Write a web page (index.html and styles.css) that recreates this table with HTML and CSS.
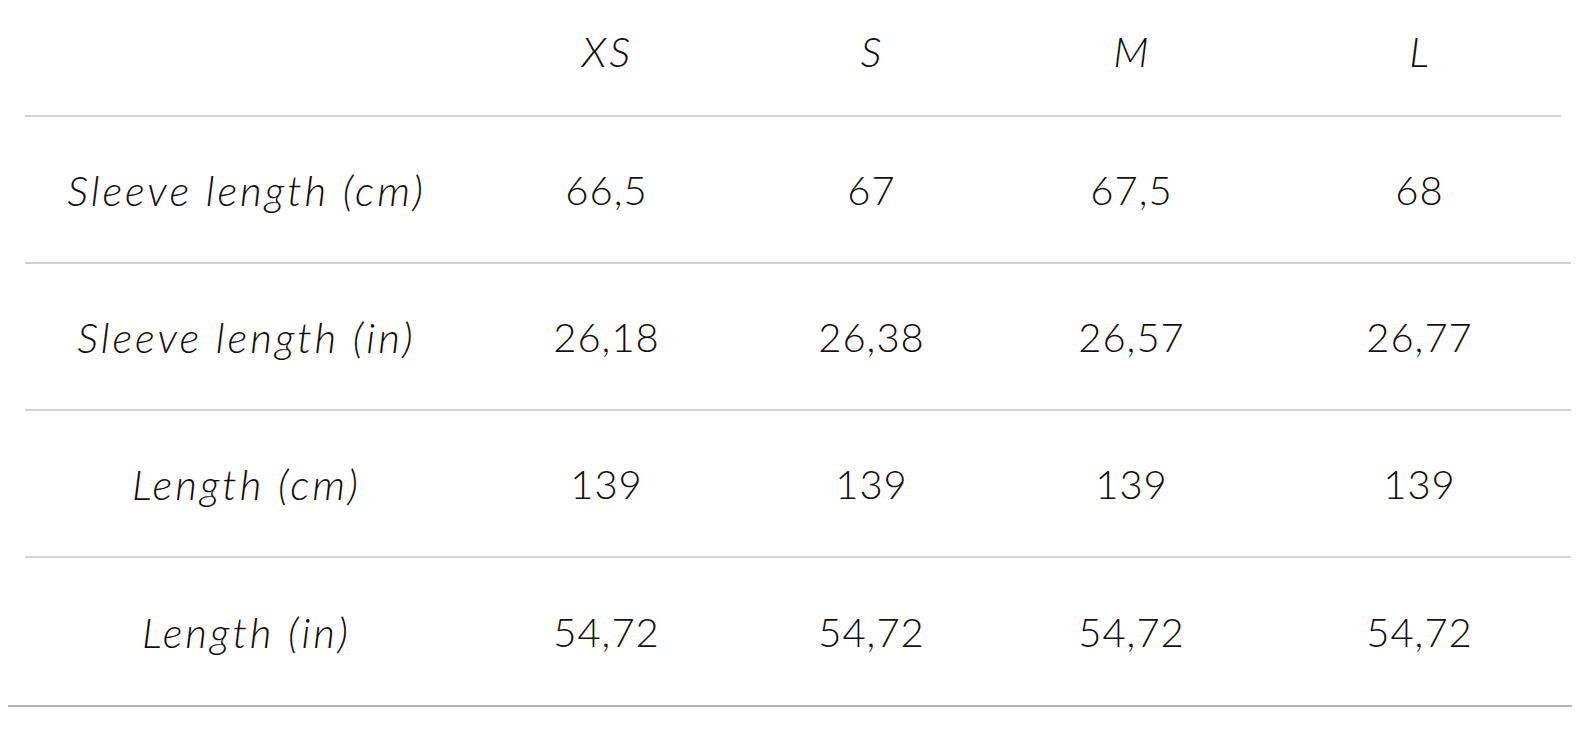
FILE: index.html
```html
<!DOCTYPE html>
<html lang="en">
<head>
<meta charset="utf-8">
<title>Size chart</title>
<link rel="stylesheet" href="styles.css">
</head>
<body>
<div class="chart">
  <div class="row head">
    <div class="cell label"></div>
    <div class="cell size">XS</div>
    <div class="cell size">S</div>
    <div class="cell size">M</div>
    <div class="cell size">L</div>
  </div>
  <div class="row">
    <div class="cell label">Sleeve length (cm)</div>
    <div class="cell num">66,5</div>
    <div class="cell num">67</div>
    <div class="cell num">67,5</div>
    <div class="cell num">68</div>
  </div>
  <div class="row">
    <div class="cell label">Sleeve length (in)</div>
    <div class="cell num">26,18</div>
    <div class="cell num">26,38</div>
    <div class="cell num">26,57</div>
    <div class="cell num">26,77</div>
  </div>
  <div class="row">
    <div class="cell label">Length (cm)</div>
    <div class="cell num">139</div>
    <div class="cell num">139</div>
    <div class="cell num">139</div>
    <div class="cell num">139</div>
  </div>
  <div class="row last">
    <div class="cell label">Length (in)</div>
    <div class="cell num">54,72</div>
    <div class="cell num">54,72</div>
    <div class="cell num">54,72</div>
    <div class="cell num">54,72</div>
  </div>
  <div class="endline"></div>
</div>
</body>
</html>
```

FILE: styles.css
```css
html, body {
  margin: 0;
  padding: 0;
  background: #ffffff;
}

body {
  font-family: "Lato", "Liberation Sans", sans-serif;
  color: #111111;
}

.chart {
  padding: 0 20px 0 25px;
}

.row {
  display: grid;
  grid-template-columns: 440px 282px 248px 272px 304px;
  height: 147px;
  align-items: center;
  border-bottom: 2px solid #d2d2d2;
  box-sizing: border-box;
}

.row.head {
  height: 117px;
  margin-right: 10px;
  align-items: start;
}

.row.head .cell {
  padding-top: 27px;
}

.row.last {
  border-bottom: none;
}

.cell {
  text-align: center;
  font-size: 40px;
  line-height: 48px;
}

.label,
.size {
  font-style: italic;
  font-weight: 300;
  font-size: 42px;
  letter-spacing: 3px;
  text-indent: 3px;
}

.num {
  font-weight: 300;
  letter-spacing: 1px;
  text-indent: 1px;
}

.endline {
  margin-left: -17px;
  margin-right: -1px;
  border-bottom: 2px solid #b4b4b4;
}
```
